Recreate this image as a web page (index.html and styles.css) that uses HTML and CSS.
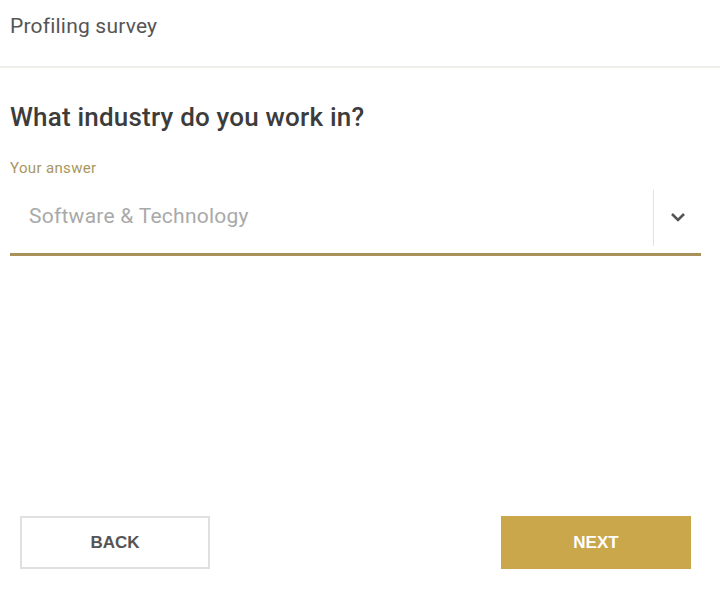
FILE: index.html
```html
<!DOCTYPE html>
<html>
<head>
<meta charset="utf-8">
<link rel="stylesheet" href="styles.css">
</head>
<body>
<div class="page">
  <header class="topbar">Profiling survey</header>
  <main class="content">
    <h1 class="question">What industry do you work in?</h1>
    <label class="field-label">Your answer</label>
    <div class="select">
      <span class="select-value">Software &amp; Technology</span>
      <span class="select-sep"></span>
      <span class="select-arrow">
        <svg width="16" height="10" viewBox="0 0 16 10"><path d="M2 2 L8 8 L14 2" fill="none" stroke="#555" stroke-width="2.6"/></svg>
      </span>
    </div>
  </main>
  <footer class="actions">
    <button class="btn btn-back">BACK</button>
    <button class="btn btn-next">NEXT</button>
  </footer>
</div>
</body>
</html>
```
FILE: styles.css
```css
html, body {
  margin: 0;
  padding: 0;
  background: #fff;
}
.page {
  width: 720px;
  height: 589px;
  display: flex;
  flex-direction: column;
  font-family: Roboto, "Liberation Sans", sans-serif;
}
.topbar {
  height: 68px;
  box-sizing: border-box;
  padding: 14px 10px 0;
  font-size: 21px;
  line-height: 24px;
  letter-spacing: 0.2px;
  color: #555;
  border-bottom: 2px solid #f0f0ea;
}
.content {
  flex: 1;
  padding: 0 19px 0 10px;
  display: flex;
  flex-direction: column;
}
.question {
  margin: 34px 0 0;
  font-size: 26px;
  font-weight: 500;
  letter-spacing: 0.2px;
  color: #3c3c3c;
  line-height: 30px;
}
.field-label {
  margin-top: 27px;
  font-size: 15px;
  letter-spacing: 0.35px;
  color: #a89660;
  line-height: 18px;
}
.select {
  margin-top: 13px;
  height: 66px;
  box-sizing: border-box;
  border-bottom: 3px solid #a8915a;
  display: flex;
  align-items: flex-start;
}
.select-value {
  flex: 1;
  padding: 14px 0 0 19px;
  font-size: 21px;
  line-height: 24px;
  letter-spacing: 0.25px;
  color: #a9a9a9;
}
.select-sep {
  width: 1px;
  height: 56px;
  background: #e2e2e2;
}
.select-arrow {
  width: 47px;
  display: flex;
  justify-content: center;
  padding-top: 22px;
}
.actions {
  display: flex;
  justify-content: space-between;
  padding: 0 29px 20px 20px;
}
.btn {
  width: 190px;
  height: 53px;
  font-family: "Liberation Sans", Arial, sans-serif;
  font-weight: bold;
  font-size: 17px;
  cursor: pointer;
}
.btn-back {
  background: #fff;
  border: 2px solid #e0e0e0;
  color: #555;
}
.btn-next {
  background: #c9a74a;
  border: none;
  color: #fff;
}
```
